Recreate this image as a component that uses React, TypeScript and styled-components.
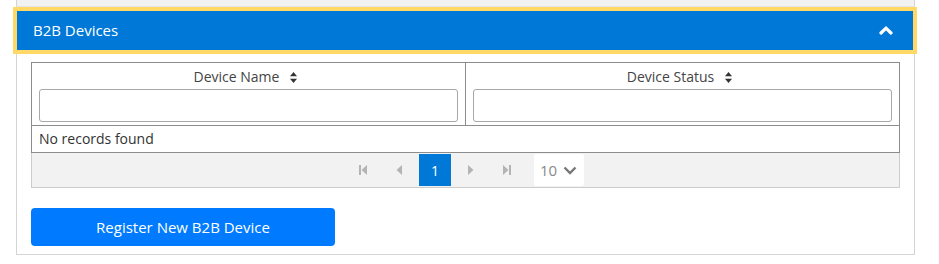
import React from "react";
import styled, { createGlobalStyle } from "styled-components";

const GlobalStyle = createGlobalStyle`
  body {
    margin: 0;
    background: #ffffff;
    font-family: "Open Sans", "Noto Sans", Arial, sans-serif;
    color: #333333;
  }
`;

const Page = styled.div`
  padding-left: 16px;
  width: 899px;
`;

const PrevPanel = styled.div`
  height: 6px;
  background: #f2f2f2;
  border-left: 1px solid #d4d4d4;
  border-right: 1px solid #d4d4d4;
  border-bottom: 1px solid #e4e4e4;
`;

const Panel = styled.div`
  border-left: 1px solid #d4d4d4;
  border-right: 1px solid #d4d4d4;
  border-bottom: 1px solid #d4d4d4;
  background: #ffffff;
`;

const Header = styled.div`
  box-sizing: border-box;
  height: 47px;
  margin: 0 -3px 0 -4px;
  border: 4px solid #ffd866;
  background: #0078d7;
  color: #ffffff;
  display: flex;
  align-items: center;
  justify-content: space-between;
  padding: 0 20px 2px 16px;
  font-size: 15px;
`;

const Chevron = styled.svg`
  width: 14px;
  height: 9px;
  margin-top: 2px;
`;

const Body = styled.div`
  padding: 8px 14px 8px 14px;
`;

const Table = styled.div`
  border: 1px solid #8c8c8c;
`;

const HeadRow = styled.div`
  display: grid;
  grid-template-columns: 434px 1fr;
  border-bottom: 1px solid #8c8c8c;
`;

const HeadCell = styled.div<{ $last?: boolean }>`
  padding: 4px 7px 3px 7px;
  border-right: ${(p) => (p.$last ? "none" : "1px solid #8c8c8c")};
  display: flex;
  flex-direction: column;
`;

const Label = styled.div`
  height: 20px;
  line-height: 20px;
  font-size: 14px;
  color: #444444;
  display: flex;
  align-items: center;
  justify-content: center;
  gap: 11px;
  padding-right: 6px;
  margin-bottom: 2px;
`;

const FilterInput = styled.input`
  box-sizing: border-box;
  height: 33px;
  width: 100%;
  border: 1px solid #a8a8a8;
  border-radius: 3px;
  background: #ffffff;
  font-family: inherit;
  font-size: 14px;
  padding: 0 8px;
  outline: none;
`;

const EmptyRow = styled.div`
  height: 26px;
  line-height: 26px;
  padding-left: 7px;
  font-size: 14px;
  color: #333333;
`;

const Pager = styled.div`
  display: flex;
  justify-content: center;
  align-items: center;
  gap: 4px;
  padding: 1px 0 1px 0;
  background: #f2f2f2;
  border: 1px solid #cccccc;
  border-top: none;
`;

const PageBtn = styled.div<{ $active?: boolean }>`
  width: 32px;
  height: 32px;
  display: flex;
  align-items: center;
  justify-content: center;
  background: ${(p) => (p.$active ? "#0078d7" : "transparent")};
  color: ${(p) => (p.$active ? "#ffffff" : "#b4b4b4")};
  font-size: 14px;
`;

const PageSize = styled.div`
  margin-left: 7px;
  width: 50px;
  height: 32px;
  box-sizing: border-box;
  background: #ffffff;
  border-radius: 2px;
  display: flex;
  align-items: center;
  padding-left: 6px;
  gap: 6px;
  font-size: 15px;
  color: #8a8a8a;
`;

const RegisterButton = styled.button`
  margin-top: 20px;
  width: 304px;
  height: 38px;
  border: none;
  border-radius: 4px;
  background: #007bff;
  color: #ffffff;
  font-family: inherit;
  font-size: 15px;
  cursor: pointer;
  display: block;
`;

const SortIcon = () => (
  <svg width="7" height="11" viewBox="0 0 7 11">
    <path d="M3.5 0 L7 4.2 L0 4.2 Z" fill="#333" />
    <path d="M0 6.8 L7 6.8 L3.5 11 Z" fill="#333" />
  </svg>
);

const FirstIcon = () => (
  <svg width="8" height="10" viewBox="0 0 8 10">
    <rect x="0" y="0" width="2" height="10" fill="#b4b4b4" />
    <path d="M8 0 L8 10 L2.5 5 Z" fill="#b4b4b4" />
  </svg>
);

const PrevIcon = () => (
  <svg width="6" height="10" viewBox="0 0 6 10">
    <path d="M6 0 L6 10 L0.5 5 Z" fill="#b4b4b4" />
  </svg>
);

const NextIcon = () => (
  <svg width="6" height="10" viewBox="0 0 6 10">
    <path d="M0 0 L0 10 L5.5 5 Z" fill="#b4b4b4" />
  </svg>
);

const LastIcon = () => (
  <svg width="8" height="10" viewBox="0 0 8 10">
    <path d="M0 0 L0 10 L5.5 5 Z" fill="#b4b4b4" />
    <rect x="6" y="0" width="2" height="10" fill="#b4b4b4" />
  </svg>
);

const columns = ["Device Name", "Device Status"];

export default function App() {
  return (
    <>
      <GlobalStyle />
      <Page>
        <PrevPanel />
        <Panel>
          <Header>
            <span>B2B Devices</span>
            <Chevron viewBox="0 0 14 9">
              <polyline
                points="2,7 7,2.2 12,7"
                fill="none"
                stroke="#ffffff"
                strokeWidth="3.2"
                strokeLinecap="round"
                strokeLinejoin="miter"
              />
            </Chevron>
          </Header>
          <Body>
            <Table>
              <HeadRow>
                {columns.map((c, i) => (
                  <HeadCell key={c} $last={i === columns.length - 1}>
                    <Label>
                      {c}
                      <SortIcon />
                    </Label>
                    <FilterInput />
                  </HeadCell>
                ))}
              </HeadRow>
              <EmptyRow>No records found</EmptyRow>
            </Table>
            <Pager>
              <PageBtn><FirstIcon /></PageBtn>
              <PageBtn><PrevIcon /></PageBtn>
              <PageBtn $active>1</PageBtn>
              <PageBtn><NextIcon /></PageBtn>
              <PageBtn><LastIcon /></PageBtn>
              <PageSize>
                10
                <svg width="14" height="9" viewBox="0 0 14 9">
                  <polyline
                    points="1.5,1.5 7,7 12.5,1.5"
                    fill="none"
                    stroke="#777"
                    strokeWidth="2.4"
                  />
                </svg>
              </PageSize>
            </Pager>
            <RegisterButton>Register New B2B Device</RegisterButton>
          </Body>
        </Panel>
      </Page>
    </>
  );
}
